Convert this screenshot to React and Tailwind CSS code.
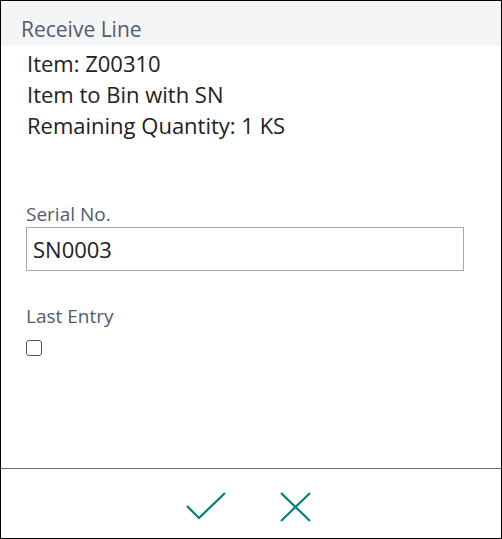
export default function App() {
  return (
    <div className="w-[502px] h-[539px] border border-black bg-white flex flex-col" style={{ fontFamily: '"Open Sans", "Noto Sans", sans-serif' }}>
      <div className="h-[45px] bg-[#f4f5f7] flex items-center pl-[20px] pt-[10px] text-[21px] leading-[28px] text-[#505c6d]">Receive Line</div>
      <div className="pl-[26px] pt-[2px] text-[22px] leading-[31px] text-[#212121]">
        <div>Item: Z00310</div>
        <div>Item to Bin with SN</div>
        <div>Remaining Quantity: 1 KS</div>
      </div>
      <div className="pl-[25px] pr-[37px] pt-[61px] flex-1">
        <div className="text-[19px] text-[#505c6d] leading-[24px]">Serial No.</div>
        <div className="mt-[1px] h-[44px] border border-[#a8a8a8] flex items-center px-[6px] text-[22px] text-[#212121]">SN0003</div>
        <div className="mt-[33px] text-[19px] text-[#505c6d] leading-[24px]">Last Entry</div>
        <div className="mt-[12px] w-[16px] h-[16px] border border-[#555] rounded-[3px]"></div>
      </div>
      <div className="h-[70px] border-t border-[#6b6b6b] flex items-center justify-center gap-[54px] pt-[6px] pl-[4px]">
        <svg width="40" height="30" viewBox="0 0 40 30" className="ml-[-8px]">
          <path d="M1 14 L13 26 L39 1" fill="none" stroke="#00807f" strokeWidth="2.2" />
        </svg>
        <svg width="32" height="30" viewBox="0 0 32 30">
          <path d="M1 1 L30 29 M30 1 L1 29" fill="none" stroke="#00807f" strokeWidth="2.2" />
        </svg>
      </div>
    </div>
  );
}
